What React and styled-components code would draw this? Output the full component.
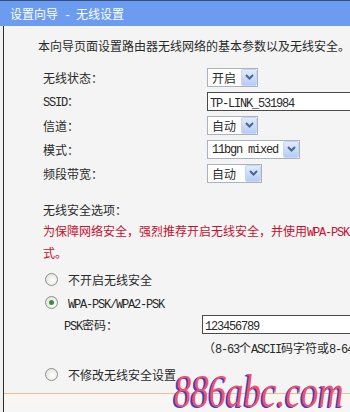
import styled, { createGlobalStyle } from "styled-components";

const GlobalStyle = createGlobalStyle`
  body {
    margin: 0;
    background: #f0f0f0;
    font-family: "Noto Sans CJK SC", sans-serif;
  }
`;

const Chevron = () => (
  <svg width="9" height="6" viewBox="0 0 9 6">
    <path d="M1 1 L4.5 4.5 L8 1" fill="none" stroke="#4b6594" strokeWidth="2" />
  </svg>
);

const Select = ({ value, w, latin }) => (
  <SelectBox w={w}>
    <SelectText>{latin ? <Latin>{value}</Latin> : value}</SelectText>
    <ArrowBtn>
      <Chevron />
    </ArrowBtn>
  </SelectBox>
);

const Radio = ({ checked, children }) => (
  <RadioRow>
    <Circle>{checked && <Dot />}</Circle>
    <span>{children}</span>
  </RadioRow>
);

const App = () => {
  return (
    <Page>
      <GlobalStyle />
      <Header>
        设置向导<Latin>{" - "}</Latin>无线设置
      </Header>
      <Body>
        <Intro>本向导页面设置路由器无线网络的基本参数以及无线安全。</Intro>

        <FormGrid>
          <Label>无线状态：</Label>
          <Select value="开启" w={51} />
          <Label><Latin>SSID</Latin>：</Label>
          <TextInput><Latin>TP-LINK_531984</Latin></TextInput>
          <Label>信道：</Label>
          <Select value="自动" w={51} />
          <Label>模式：</Label>
          <Select value="11bgn mixed" w={93} latin />
          <Label>频段带宽：</Label>
          <Select value="自动" w={55} />
        </FormGrid>

        <Section>
          <SecTitle>无线安全选项：</SecTitle>
          <Warn>
            <WarnLine>为保障网络安全，强烈推荐开启无线安全，并使用<Latin>WPA-PSK/WPA2-PSK AES</Latin>加密方</WarnLine>
            <WarnLine>式。</WarnLine>
          </Warn>

          <RadioList>
            <Radio>不开启无线安全</Radio>
            <Radio checked><Latin>WPA-PSK/WPA2-PSK</Latin></Radio>
            <PskRow>
              <span><Latin>PSK</Latin>密码：</span>
              <TextInput><Latin>123456789</Latin></TextInput>
            </PskRow>
            <Hint>（<Latin>8-63</Latin>个<Latin>ASCII</Latin>码字符或<Latin>8-64</Latin>个十六进制字符）</Hint>
            <Radio3>
              <Radio>不修改无线安全设置</Radio>
            </Radio3>
          </RadioList>
        </Section>

        <Divider />
        <Footer />
      </Body>
      <Watermark>886abc.com</Watermark>
    </Page>
  );
};

const Page = styled.div`
  position: relative;
  width: 350px;
  height: 412px;
  overflow: hidden;
  background: #f0f0f0;
  font-size: 12px;
  color: #2a2a2a;
`;

const Header = styled.div`
  height: 25px;
  border-top: 1px solid #35507f;
  background: #6c9cf0;
  color: #fff;
  line-height: 25px;
  padding-left: 10px;
  white-space: pre;
`;

const Body = styled.div`
  margin-left: 3px;
  height: 386px;
  border-left: 1px solid #2e2e2e;
  background: #f4f4f4;
  display: flex;
  flex-direction: column;
`;

const Latin = styled.span`
  font-family: "Liberation Mono", monospace;
  font-size: 12px;
  letter-spacing: -1.2px;
`;

const Intro = styled.div`
  margin-top: 13px;
  padding-left: 34px;
  line-height: 14px;
  white-space: nowrap;
`;

const FormGrid = styled.div`
  margin-top: 12px;
  padding-left: 39px;
  display: grid;
  grid-template-columns: 164px auto;
  grid-auto-rows: 24px;
  align-items: center;
`;

const Label = styled.div`
  white-space: nowrap;
`;

const SelectBox = styled.div`
  box-sizing: border-box;
  width: ${(p) => p.w}px;
  height: 19px;
  display: flex;
  align-items: center;
  justify-content: space-between;
  background: #fff;
  border: 1px solid #a9b3bf;
`;

const SelectText = styled.span`
  padding-left: 4px;
  line-height: 17px;
  white-space: nowrap;
`;

const ArrowBtn = styled.span`
  box-sizing: border-box;
  width: 16px;
  height: 17px;
  display: flex;
  align-items: center;
  justify-content: center;
  background: linear-gradient(#e2ebfd, #b7cbf4);
  border: 1px solid #c7d6f6;
  border-radius: 2px;
`;

const TextInput = styled.div`
  box-sizing: border-box;
  width: 170px;
  height: 19px;
  padding-left: 2px;
  line-height: 17px;
  background: #fff;
  border: 1px solid #4a4a4a;
  white-space: nowrap;
`;

const Section = styled.div`
  padding-left: 39px;
`;

const SecTitle = styled.div`
  margin-top: 14px;
  line-height: 22px;
`;

const Warn = styled.div`
  color: #c3102f;
  line-height: 19px;
`;

const WarnLine = styled.div`
  white-space: nowrap;
`;

const RadioList = styled.div`
  margin-top: 6px;
`;

const RadioRow = styled.div`
  height: 23px;
  display: flex;
  align-items: center;
  gap: 10px;
  padding-left: 2px;
  white-space: nowrap;
`;

const Circle = styled.span`
  box-sizing: border-box;
  width: 13px;
  height: 13px;
  border-radius: 50%;
  border: 1px solid #8d8d8d;
  background: radial-gradient(circle at 60% 60%, #ffffff, #dcdcd4);
  display: flex;
  align-items: center;
  justify-content: center;
`;

const Dot = styled.span`
  width: 5px;
  height: 5px;
  border-radius: 50%;
  background: #3e8c3e;
`;

const PskRow = styled.div`
  height: 21px;
  padding-left: 21px;
  display: grid;
  grid-template-columns: 138px auto;
  align-items: center;
  white-space: nowrap;
`;

const Hint = styled.div`
  margin-top: 3px;
  padding-left: 160px;
  line-height: 20px;
  white-space: nowrap;
`;

const Radio3 = styled.div`
  margin-top: 3px;
`;

const Divider = styled.div`
  margin-top: 7px;
  height: 1px;
  background: #efc08f;
`;

const Footer = styled.div`
  flex: 1;
  background: linear-gradient(#fbf6f1, #f6f6f6);
`;

const Watermark = styled.div`
  position: absolute;
  right: 6px;
  bottom: 0px;
  font-family: "Liberation Serif", serif;
  font-style: italic;
  font-size: 46px;
  line-height: 40px;
  color: #f2506f;
  text-shadow: -2px 1px 0 #2c46d4;
  transform: scaleX(0.76);
  transform-origin: right bottom;
  white-space: nowrap;
`;

export default App;
